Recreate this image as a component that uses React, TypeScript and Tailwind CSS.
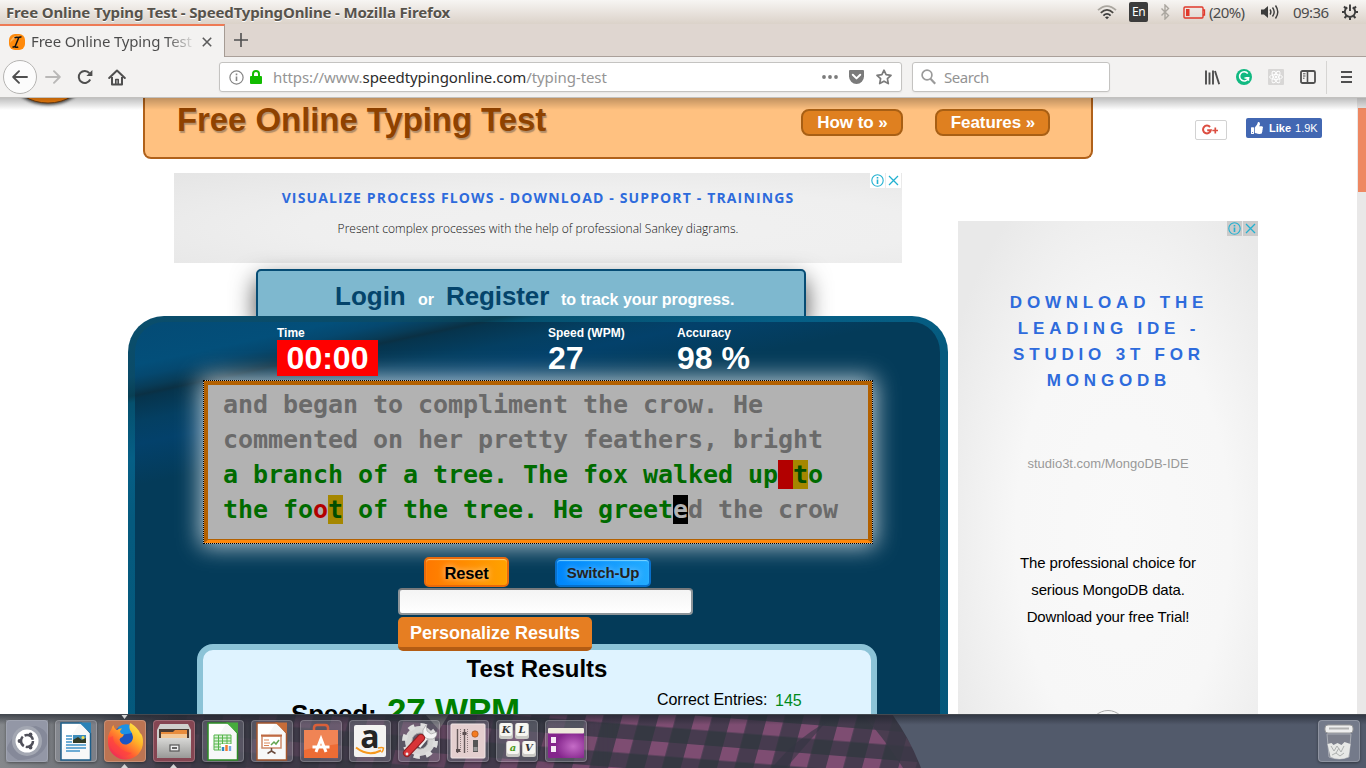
import React from "react";
import { FaThumbsUp } from "react-icons/fa";

const UI = "font-['Noto_Sans','Open_Sans',sans-serif]";

function TitleBar() {
  return (
    <div className={`flex h-[24px] shrink-0 items-center bg-gradient-to-b from-[#f7f5f3] to-[#dbd2c9] pl-[6px] text-[#57534c] ${UI}`}>
      <span className="w-[1091px] text-[15px] leading-[24px] font-bold tracking-[-0.14px] whitespace-nowrap [text-shadow:0_1px_0_#fff]">
        Free Online Typing Test - SpeedTypingOnline - Mozilla Firefox
      </span>
      <svg width="20" height="16" viewBox="0 0 20 16" fill="none">
        <path d="M1 6.2Q10-2 19 6.2" stroke="#aaa69f" strokeWidth="1.8" />
        <path d="M3.8 8.8Q10 3 16.200 8.800" stroke="#4a4844" strokeWidth="1.8" />
        <path d="M6.400 11.600Q10 8 13.600 11.600" stroke="#3c3c3c" strokeWidth="1.800" />
        <path d="M8 13.300Q10 11.500 12 13.300L10 15.300z" fill="#3c3c3c" />
      </svg>
      <span className="ml-[12px] flex h-[20px] w-[19px] items-center justify-center rounded-[2px] bg-[#3c3c3c] text-[12px] tracking-[-0.5px] text-white">En</span>
      <svg className="ml-[12px]" width="10" height="16" viewBox="0 0 10 16" fill="none" stroke="#aaa69f" strokeWidth="1.4">
        <path d="M1.500 4.500l7 7L5 15V1l3.500 3.500-7 7" />
      </svg>
      <svg className="ml-[13px]" width="23" height="13" viewBox="0 0 23 13" fill="none">
        <rect x="1" y="1" width="19" height="11" rx="1" stroke="#e0392b" strokeWidth="1.400" />
        <rect x="3" y="3" width="3.500" height="7" fill="#e0392b" />
        <path d="M20 4h1.500v5H20" stroke="#e0392b" strokeWidth="1.300" />
      </svg>
      <span className="ml-[3px] w-[49px] text-[15px] tracking-[-0.650px] whitespace-nowrap text-[#4c4c4c]">(20%)</span>
      <svg className="ml-[2px]" width="20" height="16" viewBox="0 0 20 16" fill="none" stroke="#3c3c3c" strokeWidth="1.400">
        <path d="M1 5.500h3l4-3.500v12l-4-3.500H1z" fill="#3c3c3c" stroke="none" />
        <path d="M10 5.500q1.800 2.500 0 5M12.500 3.500q3.400 4.500 0 9M15.500 1.500q4.600 6.500 0 13" />
      </svg>
      <span className="ml-[13px] w-[45px] text-[15px] tracking-[-0.550px] text-[#4c4c4c]">09:36</span>
      <svg className="ml-[4px] shrink-0" width="16" height="16" viewBox="0 0 16 16" fill="none" stroke="#3c3c3c" strokeWidth="1.900">
        <path d="M5.300 3.400a5.200 5.200 0 1 0 5.400 0M8 .5v6.500" />
        <path d="M2 2.500l2 2M14 2.500l-2 2M0 8h3M16 8h-3M2.500 14l2-2M13.500 14l-2-2M8 16v-2.500" strokeWidth="2" />
      </svg>
    </div>
  );
}

function TabStrip() {
  return (
    <div className={`flex h-[33px] shrink-0 bg-[#dfd6d0] ${UI}`}>
      <div className="flex h-[33px] w-[225px] items-center border-t-2 border-r border-t-[#ee7a55] border-r-[#a59b94] bg-[#f3f2f1] pl-[9px]">
        <svg width="16" height="16" viewBox="0 0 16 16">
          <rect width="16" height="16" rx="6" fill="#ff8a0c" />
          <path d="M1 9Q2 1 11 1.500Q4 5 1 9z" fill="#ffb45c" />
          <path d="M5.500 3.800q2-1 4-.3 1.500-.8 3-.5M9.800 3.500L6 12.800M3.500 13.300q1.500-.8 2.700-.3 1.500.6 3-.2" stroke="#111" strokeWidth="1.500" fill="none" />
        </svg>
        <span className="ml-[6px] w-[165px] overflow-hidden bg-gradient-to-r from-[#4a4a4a] from-82% to-transparent to-100% bg-clip-text text-[15px] tracking-[-0.160px] whitespace-nowrap text-transparent">
          Free Online Typing Test -
        </span>
        <svg className="ml-[6px]" width="10" height="10" viewBox="0 0 10 10" stroke="#5c5c5c" strokeWidth="1.600">
          <path d="M.8.8l8.400 8.400M9.200.8L.8 9.200" />
        </svg>
      </div>
      <div className="flex flex-1 items-center border-b border-[#aaa09a] pl-[9px]">
        <svg width="14" height="14" viewBox="0 0 14 14" stroke="#4f4f4f" strokeWidth="1.600">
          <path d="M7 0v14M0 7h14" />
        </svg>
      </div>
    </div>
  );
}

function NavBar() {
  return (
    <div className={`flex h-[41px] shrink-0 items-center border-b border-[#c2c1bf] bg-[#f3f2f1] pl-[3px] text-[14px] ${UI}`}>
      <span className="flex size-[34px] items-center justify-center rounded-full border border-[#b5b4b2] bg-[#fcfcfc]">
        <svg width="16" height="14" viewBox="0 0 16 14" fill="none" stroke="#4f4f4f" strokeWidth="1.900" strokeLinecap="round" strokeLinejoin="round">
          <path d="M15 7H1.500M7 1.200L1.200 7 7 12.800" />
        </svg>
      </span>
      <svg className="ml-[8px]" width="16" height="14" viewBox="0 0 16 14" fill="none" stroke="#b9b8b7" strokeWidth="1.900" strokeLinecap="round" strokeLinejoin="round">
        <path d="M1 7h13.500M9 1.200L14.800 7 9 12.800" />
      </svg>
      <svg className="ml-[16px]" width="16" height="16" viewBox="0 0 16 16" fill="none" stroke="#4f4f4f" strokeWidth="2">
        <path d="M13.200 10.500a6 6 0 1 1-.8-6.400" />
        <path d="M15.400 1v6H9.400z" fill="#4f4f4f" stroke="none" />
      </svg>
      <svg className="ml-[15px]" width="18" height="17" viewBox="0 0 18 17" fill="none" stroke="#4f4f4f" strokeWidth="2" strokeLinejoin="round">
        <path d="M1.200 9L9 1.600 16.800 9" strokeLinecap="round" />
        <path d="M4 8v7.500h10V8" />
        <path d="M7.800 15v-4.500h2.400V15" strokeWidth="1.600" />
      </svg>

      <div className="ml-[93px] flex h-[30px] w-[683px] items-center rounded-[3px] border border-[#c4c3c1] bg-white pl-[9px] shadow-[0_1px_2px_rgba(0,0,0,.06)]">
        <svg width="15" height="15" viewBox="0 0 15 15" fill="none" stroke="#858585">
          <circle cx="7.500" cy="7.500" r="6.600" strokeWidth="1.200" />
          <path d="M7.500 6.500V11M7.500 3.600v1.600" strokeWidth="1.600" />
        </svg>
        <svg className="ml-[6px]" width="12" height="14" viewBox="0 0 12 14">
          <path d="M3 7V4a3 3 0 0 1 6 0v3" stroke="#12bc00" strokeWidth="2" fill="none" />
          <rect y="6" width="12" height="8" rx="1" fill="#12bc00" />
        </svg>
        <span className="ml-[11px] w-[549px] text-[15px] tracking-[-0.080px] whitespace-nowrap text-[#959595]">
          https://www.<span className="text-[#2c2c2c]">speedtypingonline.com</span>/typing-test
        </span>
        <svg width="16" height="4" viewBox="0 0 16 4" fill="#7b7b7b">
          <circle cx="2" cy="2" r="1.900" /><circle cx="8" cy="2" r="1.900" /><circle cx="14" cy="2" r="1.900" />
        </svg>
        <svg className="ml-[11px]" width="15" height="14" viewBox="0 0 15 14">
          <path d="M1 0h13q1 0 1 1v5.500a7.500 7.500 0 0 1-15 0V1Q0 0 1 0z" fill="#7b7b7b" />
          <path d="M3.800 4.800l3.700 3.600 3.700-3.600" stroke="#fff" strokeWidth="2" fill="none" strokeLinecap="round" strokeLinejoin="round" />
        </svg>
        <svg className="ml-[12px]" width="16" height="16" viewBox="0 0 16 16" fill="none" stroke="#7b7b7b" strokeWidth="1.700" strokeLinejoin="round">
          <path d="M8 1.200l2.100 4.500 4.900.6-3.600 3.400.9 4.900L8 12.200l-4.300 2.400.9-4.900L1 6.300l4.900-.6z" />
        </svg>
      </div>

      <div className="ml-[10px] flex h-[30px] w-[198px] items-center rounded-[3px] border border-[#c4c3c1] bg-white pl-[8px] text-[#939393] shadow-[0_1px_2px_rgba(0,0,0,.06)]">
        <svg width="15" height="16" viewBox="0 0 15 16" fill="none" stroke="#9a9a9a" strokeWidth="1.700">
          <circle cx="6" cy="6" r="4.900" /><path d="M9.500 9.700l4.700 5" strokeWidth="2.200" />
        </svg>
        <span className="ml-[8px] text-[15px] tracking-[-0.450px]">Search</span>
      </div>

      <svg className="ml-[95px]" width="15" height="15" viewBox="0 0 15 15" stroke="#4f4f4f" strokeWidth="1.900">
        <path d="M1 .5v14M4.500 2.500v12M8 .5v14M10 1l4.200 13.300" />
      </svg>
      <svg className="ml-[16px]" width="16" height="16" viewBox="0 0 16 16" fill="none">
        <circle cx="8" cy="8" r="8" fill="#11b981" />
        <path d="M11.800 4.500A4.600 4.600 0 1 0 12.500 9H8.500" stroke="#fff" strokeWidth="1.600" />
        <path d="M10 8.800h2.500v3" stroke="#fff" strokeWidth="1.400" />
      </svg>
      <svg className="ml-[16px]" width="16" height="16" viewBox="0 0 16 16" fill="none" stroke="#fff" strokeWidth=".9">
        <rect width="16" height="16" rx="1" fill="#d8d7d6" stroke="none" />
        <ellipse cx="8" cy="8" rx="6.400" ry="2.500" />
        <ellipse cx="8" cy="8" rx="6.400" ry="2.500" transform="rotate(60 8 8)" />
        <ellipse cx="8" cy="8" rx="6.400" ry="2.500" transform="rotate(120 8 8)" />
        <circle cx="8" cy="8" r="1" fill="#fff" />
      </svg>
      <svg className="ml-[16px]" width="16" height="14" viewBox="0 0 16 14" fill="none" stroke="#4f4f4f">
        <rect x="1" y="1" width="14" height="12" rx="1.500" strokeWidth="1.800" />
        <path d="M7.500 1v12" strokeWidth="1.600" />
        <path d="M3 3.800h2.500M3 6h2.500M3 8.200h1.500" />
      </svg>
      <span className="ml-[10px] h-[33px] w-px bg-[#d6d5d3]" />
      <svg className="ml-[14px]" width="11" height="12" viewBox="0 0 11 12" stroke="#4f4f4f" strokeWidth="2">
        <path d="M0 1h11M0 6h11M0 11h11" />
      </svg>
    </div>
  );
}

function HeaderButton({ className, children }: { className: string; children: React.ReactNode }) {
  return (
    <span className={`flex h-[27px] items-center justify-center rounded-[8px] border-2 border-[#a85f14] bg-[#df8020] pl-px text-[17px] font-bold tracking-[-0.050px] text-white ${className}`}>
      {children}
    </span>
  );
}

function SiteHeader() {
  return (
    <div className="flex h-[61px] shrink-0 items-start">
      <div className="h-[10px] w-[143px] overflow-hidden">
        <svg width="143" height="10" viewBox="0 0 143 10">
          <defs><filter id="logoShadow" x="-20%" y="-20%" width="140%" height="150%"><feGaussianBlur stdDeviation="1.500" /></filter></defs>
          <ellipse cx="48" cy="-17" rx="35" ry="24" fill="#555" filter="url(#logoShadow)" />
          <ellipse cx="48" cy="-19" rx="34" ry="24" fill="#ff860c" stroke="#7a4310" strokeWidth="1" />
        </svg>
      </div>
      <div className="flex h-[61px] w-[950px] items-start rounded-b-[8px] border-x-2 border-b-2 border-[#b0611a] bg-[#ffc180]">
        <h1 className="mt-[2px] ml-[32px] w-[624px] text-[33px] leading-[40px] font-bold tracking-[-0.080px] whitespace-nowrap text-[#8f4200] [text-shadow:1px_2px_1px_rgba(100,90,80,.5)]">
          Free Online Typing Test
        </h1>
        <HeaderButton className="mt-[11px] w-[102px]">How to »</HeaderButton>
        <HeaderButton className="mt-[11px] ml-[32px] w-[115px]">Features »</HeaderButton>
      </div>
      <div className="mt-[22px] ml-[102px] flex h-[20px] w-[32px] items-center justify-center rounded-[2px] border border-[#d2d2d2] bg-white">
        <svg width="18" height="12" viewBox="0 0 18 12" fill="none" stroke="#dc4e41" strokeWidth="2">
          <path d="M8 3A3.900 3.900 0 1 0 8.800 6.300H5.200" />
          <path d="M13.300 3.500v6M10.300 6.500H16" strokeWidth="1.700" />
        </svg>
      </div>
      <div className="mt-[20px] ml-[19px] flex h-[20px] w-[76px] items-center rounded-[2px] bg-[#4267b2] pl-[5px] text-[11px] text-white">
        <FaThumbsUp className="size-[12px]" />
        <b className="ml-[6px] pt-px">Like</b>
        <span className="ml-[4px] pt-px text-[11px]">1.9K</span>
      </div>
    </div>
  );
}

function AdChoices({ className }: { className: string }) {
  return (
    <div className="flex gap-px">
      <span className={`flex h-[15px] w-[15px] items-center justify-center ${className}`}>
        <svg width="13" height="13" viewBox="0 0 13 13" fill="none" stroke="#23b1d1">
          <circle cx="6.500" cy="6.500" r="5.700" strokeWidth="1.100" />
          <path d="M6.500 5.500V10M6.500 3v1.500" strokeWidth="1.600" />
        </svg>
      </span>
      <span className={`flex h-[15px] w-[15px] items-center justify-center ${className}`}>
        <svg width="11" height="11" viewBox="0 0 11 11" stroke="#23b1d1" strokeWidth="1.300">
          <path d="M1 1l9 9M10 1l-9 9" />
        </svg>
      </span>
    </div>
  );
}

function TopAd() {
  return (
    <div className="mt-[14px] ml-[46px] h-[90px] w-[728px] bg-[radial-gradient(ellipse_at_60%_60%,#f1f1f1_0%,#efefef_50%,#e5e5e5_100%)] font-['Open_Sans',sans-serif]">
      <div className="flex h-[15px] justify-end pr-px"><AdChoices className="bg-white" /></div>
      <div className="-mt-px text-center text-[14px] leading-[22px] font-bold tracking-[1.140px] text-[#2e6bdc]">
        VISUALIZE PROCESS FLOWS - DOWNLOAD - SUPPORT - TRAININGS
      </div>
      <div className="mt-[10px] text-center text-[12px] leading-[20px] font-light text-[#111]">
        Present complex processes with the help of professional Sankey diagrams.
      </div>
    </div>
  );
}

function LoginBar() {
  return (
    <div className="mt-[6px] ml-[128px] flex h-[50px] w-[550px] items-baseline rounded-t-[5px] border-2 border-[#064c74] bg-[#7eb8cf] pl-[77px] font-bold whitespace-nowrap text-white shadow-[0_10px_24px_rgba(0,0,0,.7)]">
      <span className="w-[83px] text-[26px] leading-[50px] text-[#04446b]">Login</span>
      <span className="w-[28px] text-[16px]">or</span>
      <span className="w-[115px] text-[26px] tracking-[-0.100px] text-[#04446b]">Register</span>
      <span className="text-[16px] tracking-[-0.040px]">to track your progress.</span>
    </div>
  );
}

function Stat({ label, className, children }: { label: string; className: string; children: React.ReactNode }) {
  return (
    <div className={`flex flex-col items-start font-bold text-white ${className}`}>
      <span className="h-[14px] text-[12px] leading-[14px]">{label}</span>
      {children}
    </div>
  );
}

function TypingText() {
  return (
    <div className="ml-[68px] h-[164px] w-[670px] shrink-0 border border-dotted border-black bg-[#b2b2b2] shadow-[0_0_22px_2px_rgba(255,255,255,.75)]">
      <div className="h-[162px] border-4 border-b-[3px] border-[#b26000] border-b-[#ff880a] bg-[#b2b2b2] pt-[2px] pl-[15px] font-['DejaVu_Sans_Mono',monospace] text-[25px] leading-[35px] font-bold tracking-[-0.050px] whitespace-pre text-[#6a6a6a] shadow-[inset_0_-1px_0_#b26000]">
        <div>and began to compliment the crow. He</div>
        <div>commented on her pretty feathers, bright</div>
        <div className="text-[#006b00]">a branch of a tree. The fox walked up<span className="bg-[#b20000]"> </span><span className="bg-[#a58700] text-[#004d00]">t</span>o</div>
        <div>
          <span className="text-[#006b00]">the fo<span className="text-[#b20000]">o</span><span className="bg-[#a58700] text-[#004d00]">t</span> of the tree. He greet</span>
          <span className="bg-black text-[#b2b2b2]">e</span>d the crow
        </div>
      </div>
    </div>
  );
}

function Results() {
  return (
    <div className="-mt-[7px] ml-[62px] h-[140px] w-[680px] shrink-0 rounded-t-[16px] border-[6px] border-[#8cc3d7] bg-[#dff3ff] text-black">
      <h2 className="pt-[3px] text-center text-[24px] leading-[32px] font-bold">Test Results</h2>
      <div className="flex whitespace-nowrap">
        <span className="mt-[14px] ml-[88px] w-[96px] text-[26px] leading-[30px] font-bold tracking-[-0.200px]">Speed:</span>
        <span className="mt-[6px] w-[270px] text-[35px] leading-[40px] font-bold tracking-[-0.200px] text-[#007f00]">27 WPM</span>
        <span className="mt-[5px] w-[118px] text-[16px] leading-[20px] tracking-[-0.050px]">Correct Entries:</span>
        <span className="mt-[6px] text-[16px] leading-[20px] text-[#008a1a]">145</span>
      </div>
    </div>
  );
}

function TypingPanel() {
  return (
    <div className="relative -mt-[3px] flex h-[460px] w-[820px] shrink-0 flex-col rounded-t-[36px] border-t-[6px] border-r-[8px] border-l-[7px] border-transparent [background:linear-gradient(168deg,#044b75_0px,#034f7a_42px,#05486f_54px,#083c58_65px,#0a3044_72px,#06344d_75px,#043f62_98px,#03416b_120px,#043b59_160px,#043b59_100%)_padding-box,linear-gradient(168deg,#0a4e6c_0px,#0a4b68_60px,#083f54_79px,#05506e_86px,#065f86_140px,#055a7e_200px,#04577a_100%)_border-box]">
      <div className="relative z-10 mt-[4px] flex h-[50px] pl-[142px]">
        <Stat label="Time" className="w-[271px]">
          <span className="h-[36px] w-[101px] bg-[#ff0000] text-center text-[32px] leading-[36px]">00:00</span>
        </Stat>
        <Stat label="Speed (WPM)" className="w-[129px]">
          <span className="text-[32px] leading-[36px]">27</span>
        </Stat>
        <Stat label="Accuracy" className="w-[120px]">
          <span className="text-[32px] leading-[36px]">98 %</span>
        </Stat>
      </div>
      <div className="h-[4px] shrink-0" />
      <TypingText />
      <div className="mt-[13px] ml-[289px] flex h-[30px] shrink-0 items-center gap-[47px] font-bold">
        <span className="flex h-[30px] w-[85px] items-center justify-center rounded-[5px] border-2 border-[#e96a0c] bg-gradient-to-r from-[#ff7800] to-[#ffa200] pt-[2px] text-[16.500px] tracking-[-0.200px] text-black shadow-[inset_0_1px_1px_rgba(255,220,150,.8)] [text-shadow:0_0_6px_rgba(255,255,255,.7)]">Reset</span>
        <span className="-ml-px flex h-[29px] w-[96px] items-center justify-center rounded-[5px] border-2 border-[#0870cc] bg-gradient-to-r from-[#0086fb] to-[#22abff] pt-[2px] text-[15px] tracking-[-0.100px] text-[#222] shadow-[inset_0_1px_1px_rgba(150,225,255,.8)] [text-shadow:0_0_6px_rgba(255,255,255,.5)]">Switch-Up</span>
      </div>
      <div className="mt-px ml-[263px] h-[27px] w-[295px] shrink-0 rounded-[4px] border-2 border-[#8d9499] border-t-[#77797c] bg-gradient-to-b from-[#f4f4f4] to-white" />
      <div className="relative z-10 mt-[2px] ml-[263px] flex h-[34px] w-[194px] shrink-0 items-center justify-center rounded-[5px] border-b-4 border-[#b35c14] bg-[#e67e22] pt-[2px] text-[18px] font-bold text-white">
        Personalize Results
      </div>
      <Results />
    </div>
  );
}

function SideAd() {
  return (
    <div className="mt-[62px] ml-[10px] h-[520px] w-[300px] bg-[radial-gradient(ellipse_65%_75%_at_55%_60%,#f9f9f9_0%,#f7f7f7_55%,#e9e9e9_100%)] text-center">
      <div className="flex h-[15px] justify-end"><AdChoices className="bg-[#cbcbcb]" /></div>
      <div className="mt-[54px] pl-[2px] text-[17px] leading-[26px] font-bold tracking-[4.800px] text-[#2e6bdc]">
        <div>DOWNLOAD THE</div><div>LEADING IDE -</div><div>STUDIO 3T FOR</div><div>MONGODB</div>
      </div>
      <div className="mt-[60px] text-[13px] leading-[20px] text-[#999]">studio3t.com/MongoDB-IDE</div>
      <div className="mt-[75px] text-[15px] leading-[27px] tracking-[-0.160px] text-black">
        <div>The professional choice for</div><div>serious MongoDB data.</div><div>Download your free Trial!</div>
      </div>
      <div className="mx-auto mt-[80px] size-[36px] rounded-full border border-[#aaa]" />
    </div>
  );
}

function Tile({ className = "bg-[rgba(200,200,215,.2)]", children }: { className?: string; children: React.ReactNode }) {
  return (
    <div className={`flex size-[42px] shrink-0 items-center justify-center rounded-[4px] shadow-[inset_0_0_0_1px_rgba(255,255,255,.2),0_1px_3px_rgba(0,0,0,.4)] ${className}`}>
      <svg width="42" height="42" viewBox="0 0 42 42">{children}</svg>
    </div>
  );
}

function DocShape({ dark, light }: { dark: string; light: string }) {
  return (
    <>
      <path d="M6 3h20.500l9 10v27H6z" fill="#f7f8f8" stroke={dark} strokeWidth="1.500" />
      <path d="M24 2.500h12v11z" fill={light} />
      <path d="M7 4h17L7 30z" fill="#fff" />
    </>
  );
}

function Key({ x, y, color, letter }: { x: number; y: number; color: string; letter: string }) {
  return (
    <g>
      <rect x={x} y={y} width="14" height="16" rx="2.500" fill="#c9c9c4" />
      <rect x={x + 1} y={y} width="12" height="13" rx="2" fill="#f6f6f1" />
      <text x={x + 7} y={y + 10} fontSize="10" fontWeight="700" fontStyle="italic" textAnchor="middle" fill={color} fontFamily="DejaVu Serif, serif">{letter}</text>
    </g>
  );
}

function DockBackdrop() {
  return (
    <svg className="absolute inset-0" width="1366" height="54" viewBox="0 0 1366 54">
      <defs>
        <linearGradient id="wall" x1="0" x2="1">
          <stop offset="0" stopColor="#85888c" /><stop offset=".07" stopColor="#6a6d73" /><stop offset=".1" stopColor="#484a53" /><stop offset=".13" stopColor="#3a3944" /><stop offset="1" stopColor="#393844" />
        </linearGradient>
        <linearGradient id="topShade" x1="0" x2="0" y1="0" y2="1">
          <stop offset="0" stopColor="#1a1f28" stopOpacity=".65" /><stop offset=".2" stopColor="#1a1f28" stopOpacity="0" />
        </linearGradient>
        <pattern id="plaid" width="35.500" height="29" patternUnits="userSpaceOnUse" patternTransform="translate(624 -4) skewY(4.500) skewX(-15)">
          <rect width="36" height="29" fill="#353842" />
          <rect width="17" height="29" fill="#473b4f" />
          <rect width="36" height="14" fill="#473b4f" />
          <rect width="17" height="14" fill="#7e4d72" />
        </pattern>
        <linearGradient id="fade"><stop offset="0" stopColor="#fff" stopOpacity=".08" /><stop offset=".35" stopColor="#fff" stopOpacity=".5" /><stop offset=".55" stopColor="#fff" stopOpacity=".85" /><stop offset=".6" stopColor="#fff" /></linearGradient>
        <mask id="plaidMask"><rect x="140" width="800" height="54" fill="url(#fade)" /></mask>
      </defs>
      <rect width="1366" height="54" fill="url(#wall)" />
      <path d="M140 0H892L925 54H140z" fill="url(#plaid)" mask="url(#plaidMask)" />
      <path d="M826 8L786 54h-14q20-26 54-46z" fill="#343642" opacity=".6" />
      <path d="M862 0h32l31 54h-22Q884 24 862 0z" fill="#3a3846" opacity=".75" />
      <path d="M892 0h474v54H921Q910 25 892 0z" fill="#525a6b" />
      <path d="M425 0h24l-10 16z" fill="#888" opacity=".6" />
      <rect width="1366" height="54" fill="url(#topShade)" />
      <path d="M0 .5h1366" stroke="#444950" />
      <path d="M121.500 1h6l-3 4zM121 54l3.500-4 3.500 4zM170 54l3.500-4 3.500 4z" fill="#d5d5d5" />
    </svg>
  );
}

function Dock() {
  return (
    <div className="relative h-[54px] shrink-0 overflow-hidden">
      <DockBackdrop />
      <div className="relative flex gap-[7px] pt-[6px] pl-[6px]">
        <Tile className="bg-[#858999]">
          <path d="M0 30Q8 8 30 6Q38 8 42 16V0H0zM42 20Q38 40 12 40Q4 36 0 28v14h42z" fill="#a4a8b5" opacity=".45" />
          <circle cx="21" cy="21" r="15" fill="#a3a7b2" />
          <circle cx="21" cy="21" r="11.500" fill="#fff" />
          <circle cx="21" cy="21" r="6" fill="none" stroke="#50505a" strokeWidth="2.500" strokeDasharray="10.500 2" />
          <circle cx="13.500" cy="21" r="1.900" fill="#50505a" /><circle cx="24.500" cy="14.500" r="1.900" fill="#50505a" /><circle cx="24.500" cy="27.500" r="1.900" fill="#50505a" />
        </Tile>
        <Tile>
          <DocShape dark="#1c5d89" light="#2a83b8" />
          <path d="M11 16h6M11 19h6M11 22h6M11 25h20M11 28h20M11 31h14" stroke="#4093c8" strokeWidth="1.700" />
          <rect x="18" y="15" width="13" height="8" fill="#3d8dbb" /><path d="M18 23v-3l5-3 4 3 4-2v5z" fill="#333b25" /><circle cx="28" cy="17.500" r="1.500" fill="#f8e04a" />
        </Tile>
        <Tile className="bg-[#bc7452]">
          <defs><linearGradient id="fox" x1=".9" y1="0" x2=".1" y2="1"><stop offset="0" stopColor="#fff04a" /><stop offset=".35" stopColor="#ffb228" /><stop offset=".65" stopColor="#ff5a32" /><stop offset="1" stopColor="#e91a65" /></linearGradient></defs>
          <circle cx="21" cy="19" r="13" fill="#1a55c2" />
          <path d="M14 7q6-4 12-2l3 8-13 2z" fill="#1c91e5" />
          <path d="M26.500 3Q34 8 36 13Q39 15 39 22A17.500 17 0 0 1 4 23Q3 15 7.500 9Q8 6 9.500 5Q10 9 13 10Q15 8 18 8.500Q16 10 16 12Q17 14 20 14.500Q19 17 16.500 18Q15 19 16 21Q19 26 24 24Q29 22 29 17Q28 12 26 10Q24.500 6 26.500 3z" fill="url(#fox)" />
          <path d="M5 18q0 11 8 16 8 4 15-1Q19 32 14 26 9 23 9 16z" fill="#ff3d45" opacity=".55" />
        </Tile>
        <Tile className="bg-[#854552]">
          <defs><linearGradient id="cab" x1="0" x2="0" y1="0" y2="1"><stop stopColor="#d8d8d6" /><stop offset="1" stopColor="#999997" /></linearGradient></defs>
          <path d="M7 4h28l3 6v28H4V10z" fill="#cfcfcd" />
          <rect x="6" y="9" width="30" height="10" fill="#4a3a32" /><path d="M8 12h12l2-2h12v8H8z" fill="#e88c3c" /><path d="M8 14h26v4H8z" fill="#f3c897" />
          <rect x="4" y="18" width="34" height="20" rx="1" fill="url(#cab)" /><rect x="17" y="25" width="9" height="6" fill="#eee" stroke="#555" strokeWidth="1.200" /><path d="M19 28h5" stroke="#666" strokeWidth="2" />
        </Tile>
        <Tile>
          <DocShape dark="#2c8c24" light="#46ab3c" />
          <rect x="12" y="15" width="17" height="15" fill="#dff3dc" /><path d="M12 15h17v15H12zM12 18h17M12 21h17M12 24h17M12 27h17M16.500 15v15M20.500 15v15M25 15v15" stroke="#55b54a" fill="none" />
          <rect x="19" y="24" width="11" height="7" fill="#fff" /><path d="M21 31v-4" stroke="#2e86c1" strokeWidth="2.500" /><path d="M24.500 31v-6" stroke="#f07b32" strokeWidth="2.500" /><path d="M28 31v-5" stroke="#74a9e0" strokeWidth="2.500" />
        </Tile>
        <Tile>
          <DocShape dark="#a4562c" light="#c66c38" />
          <rect x="11" y="16" width="19" height="12" fill="#fff" stroke="#ce8968" strokeWidth="1.500" /><path d="M10 15.500h21" stroke="#bf6a43" strokeWidth="2" /><path d="M13 20h5M13 23h6M13 25.500h5" stroke="#db8658" /><path d="M20 25l3-3 2 2 3-4" stroke="#63a550" strokeWidth="1.500" fill="none" /><path d="M20.500 28v3l-4 2.500M20.500 31l4 2.500" stroke="#6b4b3d" strokeWidth="1.500" fill="none" />
        </Tile>
        <Tile>
          <path d="M14 12V8q0-3 3-3h8q3 0 3 3v4" fill="none" stroke="#d9603a" strokeWidth="2.500" />
          <path d="M4 10h34v28H4z" fill="#ed6c35" /><path d="M4 10h34v14Q20 26 4 30z" fill="#f08455" />
          <path d="M16 32l5-13 5 13M12.500 27h17" stroke="#fff" strokeWidth="3" fill="none" />
        </Tile>
        <Tile>
          <rect x="5" y="5" width="32" height="32" rx="2" fill="#f4f3f2" />
          <text x="21" y="27.500" fontFamily="Open Sans, sans-serif" fontSize="32" fontWeight="700" textAnchor="middle" fill="#252525">a</text>
          <path d="M7 27.500Q19 37 32 30.500" stroke="#f7981d" strokeWidth="2" fill="none" /><path d="M29 28q4-1 5.500 0-.2 3-2 4.500" stroke="#f7981d" strokeWidth="1.500" fill="none" />
        </Tile>
        <Tile>
          <circle cx="22" cy="21" r="11.500" fill="none" stroke="#d6d6d6" strokeWidth="7" /><circle cx="22" cy="21" r="15.500" fill="none" stroke="#dedede" strokeWidth="5" strokeDasharray="6.100 6.070" /><circle cx="22" cy="21" r="8" fill="none" stroke="#aaa" strokeWidth="1" />
          <path d="M20 26l10-12" stroke="#eee" strokeWidth="6" /><path d="M28 5l1 6 4 3 6-2q0 8-8 7-7-1-6-9z" fill="#f3f3f3" stroke="#999" strokeWidth=".6" />
          <path d="M9 33l14-15" stroke="#8d1f22" strokeWidth="8" strokeLinecap="round" /><path d="M9 33l14-15" stroke="#d83438" strokeWidth="6" strokeLinecap="round" /><circle cx="9" cy="34" r="1.400" fill="#eee" />
        </Tile>
        <Tile>
          <rect x="4" y="4" width="34" height="34" rx="1" fill="#e4cfcf" stroke="#f0e5e5" /><path d="M10.500 9v24M17.500 9v24" stroke="#65595a" strokeWidth="1.400" /><path d="M13.500 9v24M20.500 9v24" stroke="#8c7c7d" strokeDasharray="1 1" /><rect x="9" y="29" width="4" height="3" fill="#5b4f50" /><rect x="15.500" y="12" width="4" height="3" fill="#5b4f50" /><circle cx="28" cy="14" r="3.200" fill="#f47b20" stroke="#964917" strokeWidth=".6" /><rect x="26" y="20" width="5" height="12" fill="#555" /><rect x="26.500" y="27" width="4" height="4" fill="#999" />
        </Tile>
        <Tile>
          <Key x={3} y={3} color="#333" letter="K" /><Key x={19} y={3} color="#333" letter="L" /><Key x={10} y={21} color="#4b9b19" letter="a" /><Key x={26} y={21} color="#333" letter="V" />
        </Tile>
        <Tile>
          <defs><radialGradient id="purple" cx=".7" cy=".6"><stop stopColor="#c56cc7" /><stop offset="1" stopColor="#84258c" /></radialGradient></defs>
          <rect x="3" y="9" width="36" height="29" rx="1" fill="url(#purple)" /><rect x="3" y="8" width="36" height="5.500" rx="1" fill="#efebdc" /><rect x="6" y="17" width="5" height="6" fill="#f5e9f5" /><rect x="6" y="26" width="5" height="6" fill="#f5e9f5" />
        </Tile>
        <div className="w-[717px] shrink-0" />
        <Tile className="bg-[#747a8a]">
          <rect x="7" y="5" width="28" height="8" rx="3" fill="#eee" stroke="#999" /><path d="M11 8.500h20" stroke="#b2b2b2" strokeWidth="2" />
          <path d="M9 14h24l-2 23q-10 4-20 0z" fill="#7d808c" stroke="#a9acb4" />
          <path d="M9.500 24l4-1 2 2 4-2 4 2 3-3 6 2-2 13q-9 4-18 0z" fill="#e7e8e6" /><path d="M13 26l3 5 3-5 4 6 3-6M14 35l4-2 4 3 4-3M21 28l-3 5" stroke="#adb0af" fill="none" />
        </Tile>
      </div>
    </div>
  );
}

export default function App() {
  return (
    <div className="flex h-[768px] w-[1366px] flex-col overflow-hidden bg-white font-['Liberation_Sans',sans-serif]">
      <TitleBar />
      <TabStrip />
      <NavBar />
      <div className="relative flex h-[616px] shrink-0 overflow-hidden">
        <div className="flex w-[1357px] flex-col">
          <SiteHeader />
          <div className="flex items-start pl-[128px]">
            <div className="flex w-[820px] flex-col">
              <TopAd />
              <LoginBar />
              <TypingPanel />
            </div>
            <SideAd />
          </div>
        </div>
        <div className="w-[9px] bg-[#e9e8e8] pt-[10px] pl-px">
          <div className="h-[84px] bg-[#ee8862]" />
        </div>
        <div className="absolute inset-x-0 top-0 h-[12px] bg-gradient-to-b from-black/25 to-transparent" />
      </div>
      <Dock />
    </div>
  );
}
